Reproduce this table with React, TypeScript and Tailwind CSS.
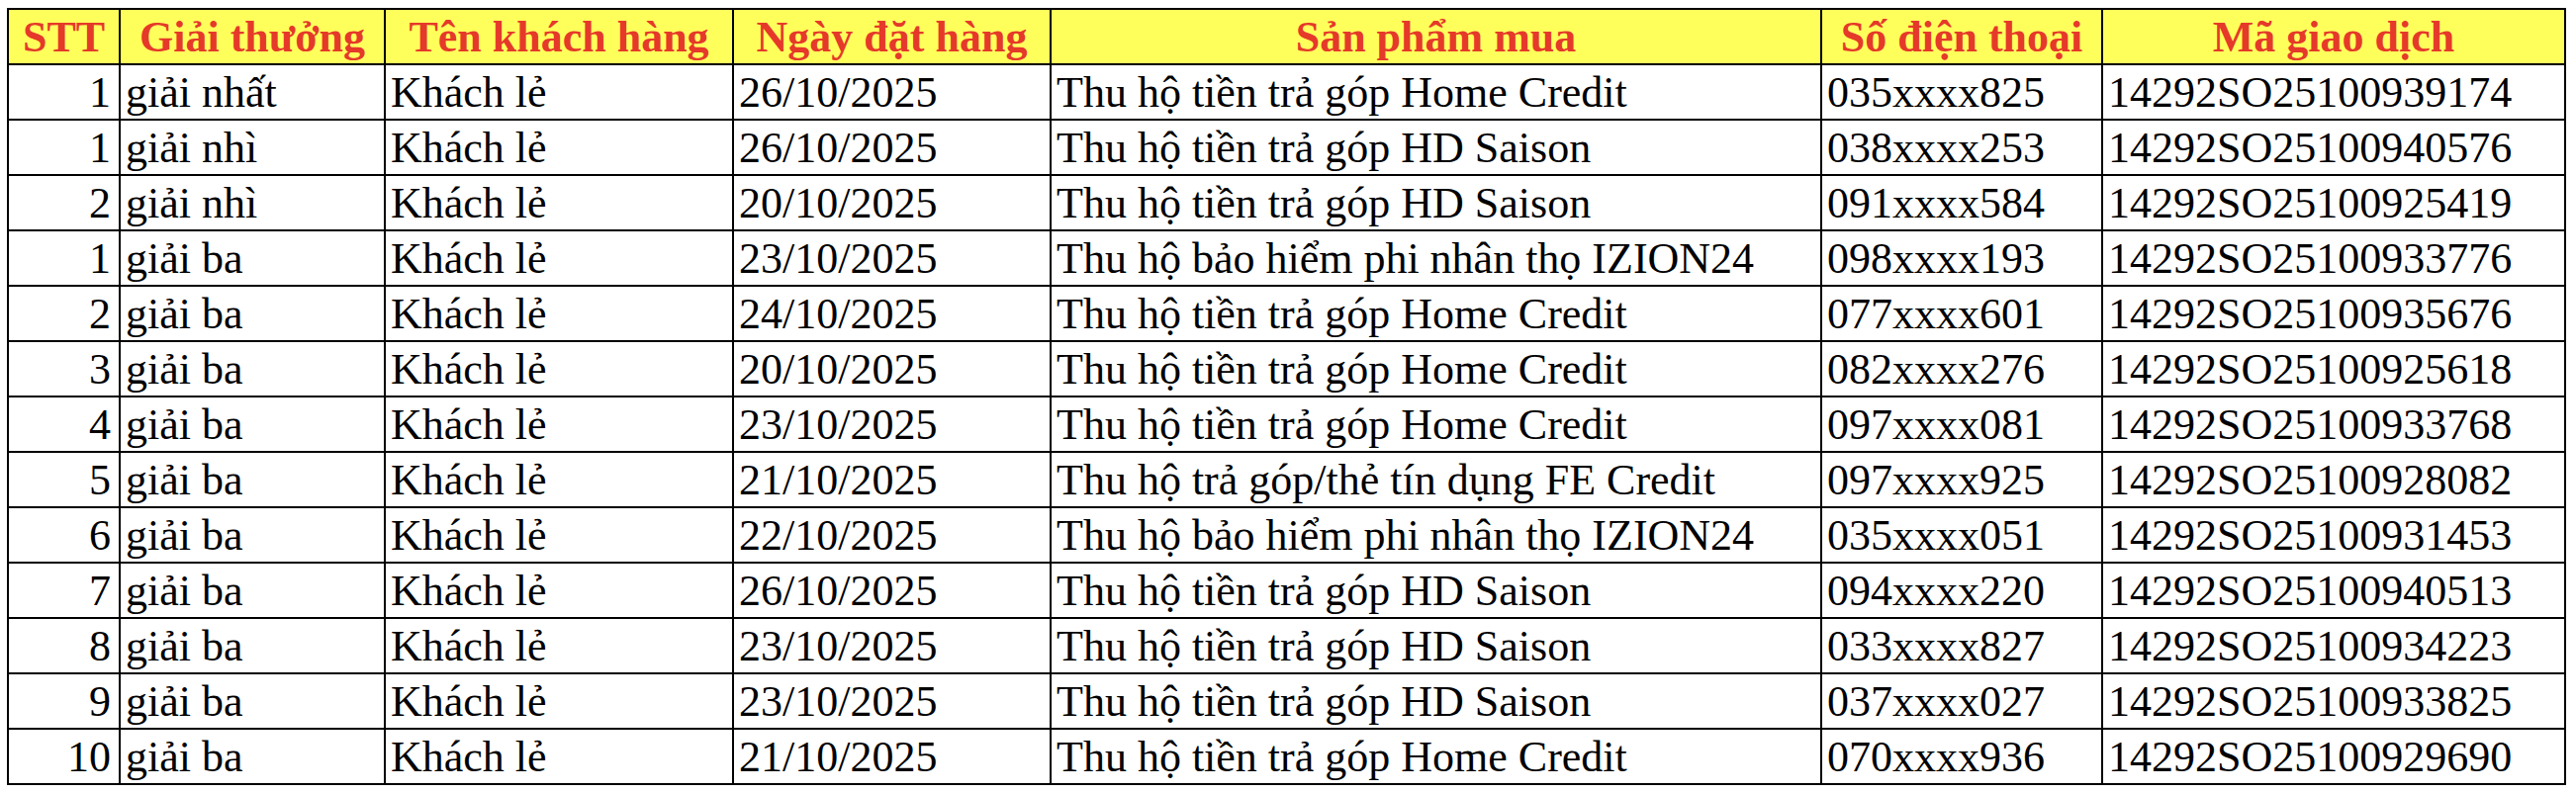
import React from "react";

const rows: [string, string, string, string, string, string, string][] = [
  ["1", "giải nhất", "Khách lẻ", "26/10/2025", "Thu hộ tiền trả góp Home Credit", "035xxxx825", "14292SO25100939174"],
  ["1", "giải nhì", "Khách lẻ", "26/10/2025", "Thu hộ tiền trả góp HD Saison", "038xxxx253", "14292SO25100940576"],
  ["2", "giải nhì", "Khách lẻ", "20/10/2025", "Thu hộ tiền trả góp HD Saison", "091xxxx584", "14292SO25100925419"],
  ["1", "giải ba", "Khách lẻ", "23/10/2025", "Thu hộ bảo hiểm phi nhân thọ IZION24", "098xxxx193", "14292SO25100933776"],
  ["2", "giải ba", "Khách lẻ", "24/10/2025", "Thu hộ tiền trả góp Home Credit", "077xxxx601", "14292SO25100935676"],
  ["3", "giải ba", "Khách lẻ", "20/10/2025", "Thu hộ tiền trả góp Home Credit", "082xxxx276", "14292SO25100925618"],
  ["4", "giải ba", "Khách lẻ", "23/10/2025", "Thu hộ tiền trả góp Home Credit", "097xxxx081", "14292SO25100933768"],
  ["5", "giải ba", "Khách lẻ", "21/10/2025", "Thu hộ trả góp/thẻ tín dụng FE Credit", "097xxxx925", "14292SO25100928082"],
  ["6", "giải ba", "Khách lẻ", "22/10/2025", "Thu hộ bảo hiểm phi nhân thọ IZION24", "035xxxx051", "14292SO25100931453"],
  ["7", "giải ba", "Khách lẻ", "26/10/2025", "Thu hộ tiền trả góp HD Saison", "094xxxx220", "14292SO25100940513"],
  ["8", "giải ba", "Khách lẻ", "23/10/2025", "Thu hộ tiền trả góp HD Saison", "033xxxx827", "14292SO25100934223"],
  ["9", "giải ba", "Khách lẻ", "23/10/2025", "Thu hộ tiền trả góp HD Saison", "037xxxx027", "14292SO25100933825"],
  ["10", "giải ba", "Khách lẻ", "21/10/2025", "Thu hộ tiền trả góp Home Credit", "070xxxx936", "14292SO25100929690"],
];

const headers = ["STT", "Giải thưởng", "Tên khách hàng", "Ngày đặt hàng", "Sản phẩm mua", "Số điện thoại", "Mã giao dịch"];
const widths = ["w-[113px]", "w-[268px]", "w-[352px]", "w-[321px]", "w-[779px]", "w-[284px]", "w-[468px]"];

export default function App() {
  return (
    <div className="bg-white w-[2604px] h-[802px] pt-[8px] pl-[7px] font-['Liberation_Serif','Times_New_Roman',serif]">
      <table className="border-collapse table-fixed w-[2587px] text-[44px] leading-none text-black">
        <colgroup>
          {widths.map((w, i) => (
            <col key={i} className={w} />
          ))}
        </colgroup>
        <thead>
          <tr className="h-[56px]">
            {headers.map((h) => (
              <th
                key={h}
                className="border-2 border-black bg-[#ffff5c] text-[#e5392a] font-bold text-center align-bottom pb-[4px] px-[4px] whitespace-nowrap"
              >
                {h}
              </th>
            ))}
          </tr>
        </thead>
        <tbody>
          {rows.map((r, ri) => (
            <tr key={ri} className="h-[56px]">
              {r.map((c, ci) => (
                <td
                  key={ci}
                  className={
                    "border-2 border-black align-bottom pb-[4px] whitespace-nowrap " +
                    (ci === 0 ? "text-right pr-[8px]" : "text-left pl-[5px]")
                  }
                >
                  {c}
                </td>
              ))}
            </tr>
          ))}
        </tbody>
      </table>
    </div>
  );
}
